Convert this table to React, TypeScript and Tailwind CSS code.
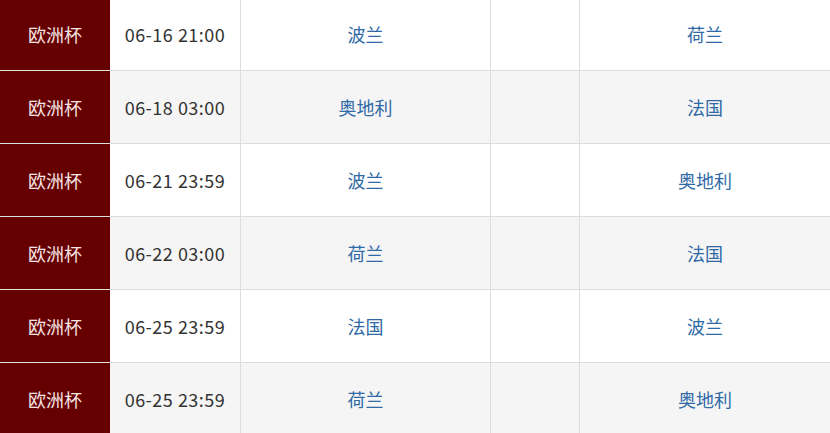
const MATCHES = [
  { time: "06-16 21:00", home: "波兰", away: "荷兰" },
  { time: "06-18 03:00", home: "奥地利", away: "法国" },
  { time: "06-21 23:59", home: "波兰", away: "奥地利" },
  { time: "06-22 03:00", home: "荷兰", away: "法国" },
  { time: "06-25 23:59", home: "法国", away: "波兰" },
  { time: "06-25 23:59", home: "荷兰", away: "奥地利" },
];

export default function App() {
  return (
    <div
      className="h-[433px] w-[830px] overflow-hidden bg-white text-[18px]"
      style={{ fontFamily: '"Noto Sans CJK SC", "Noto Sans", sans-serif' }}
    >
      <div className="-mt-[2px]">
        {MATCHES.map((m, i) => (
          <div
            key={i}
            className={`grid h-[73px] grid-cols-[110px_131px_250px_89px_1fr] border-b border-[#dddddd] ${
              i % 2 === 1 ? "bg-[#f5f5f5]" : "bg-white"
            }`}
          >
            <div className="flex items-center justify-center bg-[#660000] text-[#f6e4e4]">
              欧洲杯
            </div>
            <div className="flex items-center justify-center border-r border-[#dddddd] tracking-[0.5px] text-[#333333]">
              {m.time}
            </div>
            <div className="flex items-center justify-center border-r border-[#dddddd] text-[#2f6aa6]">
              {m.home}
            </div>
            <div className="border-r border-[#dddddd]" />
            <div className="flex items-center justify-center text-[#2f6aa6]">
              {m.away}
            </div>
          </div>
        ))}
      </div>
    </div>
  );
}
